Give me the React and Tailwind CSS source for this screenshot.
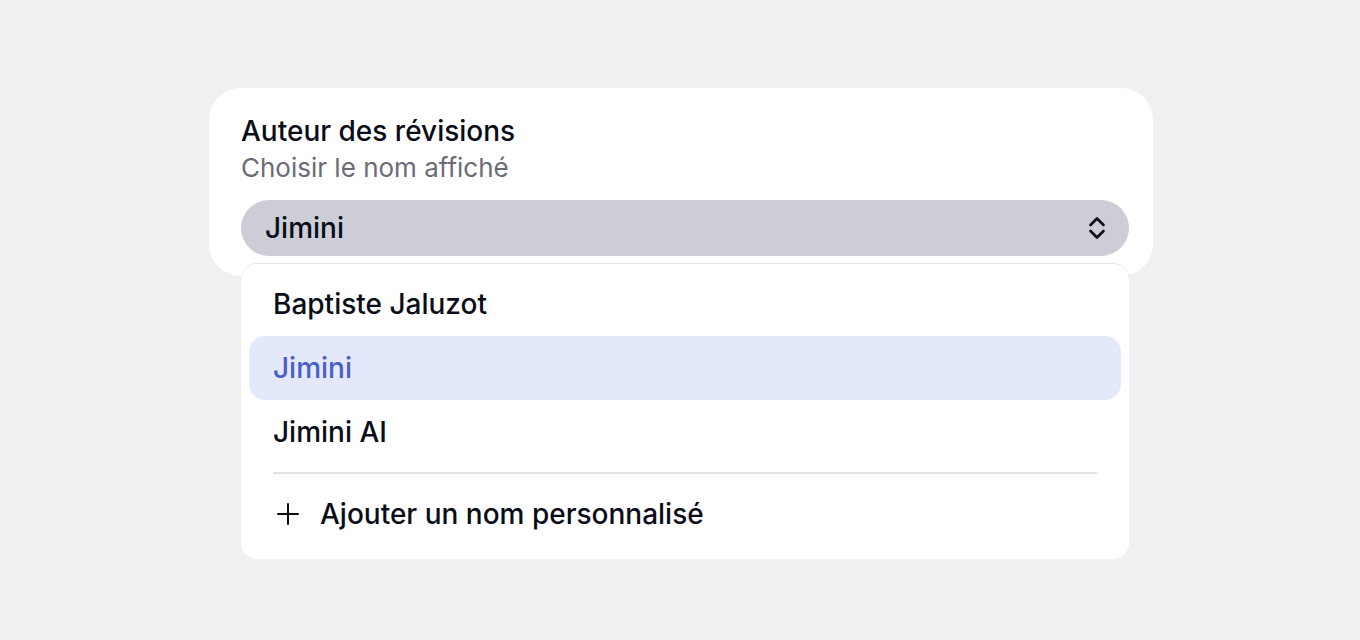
const options = ["Baptiste Jaluzot", "Jimini", "Jimini AI"];

function UpDownIcon() {
  return (
    <svg width="18" height="24" viewBox="0 0 18 24" fill="none" stroke="currentColor" strokeWidth="2.6" strokeLinecap="round" strokeLinejoin="round">
      <path d="M2.5 9 9 2.5l6.5 6.5" />
      <path d="M2.5 15 9 21.5l6.5-6.5" />
    </svg>
  );
}

function PlusIcon() {
  return (
    <svg width="22" height="22" viewBox="0 0 22 22" fill="none" stroke="currentColor" strokeWidth="2" strokeLinecap="round">
      <path d="M11 1v20" />
      <path d="M1 11h20" />
    </svg>
  );
}

export default function App() {
  const selected = "Jimini";

  return (
    <div
      className="min-h-screen w-full bg-[#f0f0f3] pt-[88px] pl-[2px] flex justify-center"
      style={{ fontFamily: "Inter, 'Noto Sans', sans-serif" }}
    >
      <div className="relative w-[944px] h-[188px] bg-white rounded-[32px] pl-8 pr-6 pt-[25px]">
        {/* HEADER */}
        <h1 className="text-[28px] leading-[36px] font-medium text-[#0a0d17]">
          Auteur des révisions
        </h1>
        <p className="text-[26px] leading-[34px] text-[#6b6b76] mt-[2px]">
          Choisir le nom affiché
        </p>

        {/* TRIGGER */}
        <button className="mt-[15px] w-full h-14 rounded-full bg-[#cdcdd7] flex items-center justify-between pl-6 pr-[23px] text-[28px] font-medium text-[#0a0d17]">
          <span>{selected}</span>
          <UpDownIcon />
        </button>

        {/* MENU */}
        <div className="absolute left-8 right-6 top-[176px] bg-white rounded-2xl shadow-[0_-1px_0_#e6e6ea] px-2 pt-2 pb-[13px] z-10">
          {options.map((name) => (
            <div
              key={name}
              className={
                name === selected
                  ? "h-16 flex items-center px-6 rounded-2xl bg-[#e4e8fb] text-[#4a5ec8] text-[28px] font-medium"
                  : "h-16 flex items-center px-6 rounded-2xl text-[#0a0d17] text-[28px] font-medium"
              }
            >
              {name}
            </div>
          ))}

          <div className="mx-6 my-2 h-[2px] bg-[#e3e3e6]" />

          <div className="h-16 flex items-center gap-[21px] px-7 text-[28px] font-medium text-[#0a0d17]">
            <PlusIcon />
            <span>Ajouter un nom personnalisé</span>
          </div>
        </div>
      </div>
    </div>
  );
}
